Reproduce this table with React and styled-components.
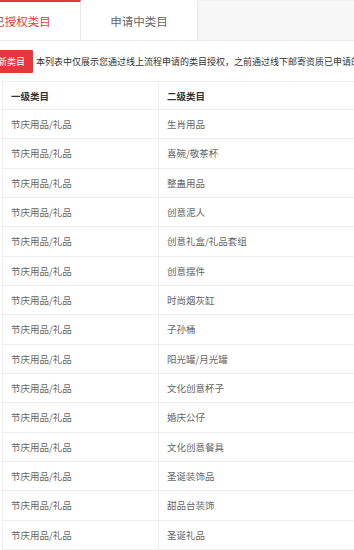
import React from "react";
import styled, { createGlobalStyle } from "styled-components";

const GlobalStyle = createGlobalStyle`
  html, body {
    margin: 0;
    padding: 0;
    background: #fff;
  }
  body {
    font-family: "Noto Sans CJK SC", "Noto Sans", "Liberation Sans", sans-serif;
  }
`;

const Page = styled.div`
  width: 354px;
  height: 550px;
  overflow: hidden;
  background: #fff;
`;

const TabBar = styled.div`
  display: flex;
  height: 39px;
  border-top: 1px solid #eee;
  border-bottom: 1px solid #eaeaea;
  background: #f7f7f7;
`;

const TabList = styled.div`
  display: flex;
  margin-left: -36px;
`;

const Tab = styled.div`
  width: 117px;
  box-sizing: border-box;
  display: flex;
  align-items: center;
  justify-content: center;
  background: #fff;
  font-size: 11.5px;
  color: ${(p) => (p.$active ? "#e4393c" : "#666")};
  border-top: 2px solid ${(p) => (p.$active ? "#e4393c" : "#fff")};
  margin-top: -1px;
  border-right: 1px solid #e8e8e8;
  padding-bottom: 1px;
`;

const Toolbar = styled.div`
  display: flex;
  align-items: center;
  height: 23px;
  margin-top: 9px;
  margin-left: -28px;
  white-space: nowrap;
`;

const AddButton = styled.div`
  height: 23px;
  padding: 0 8px;
  display: flex;
  align-items: center;
  background: #e4393c;
  color: #fff;
  font-size: 9px;
  border-radius: 1px;
`;

const Note = styled.span`
  margin-left: 3px;
  font-size: 9px;
  color: #333;
`;

const Table = styled.div`
  margin-top: 8px;
  margin-left: 2px;
  width: 520px;
  border-top: 1px solid #eee;
  border-left: 1px solid #eee;
`;

const Row = styled.div`
  display: grid;
  grid-template-columns: 155px 1fr;
  height: ${(p) => (p.$head ? "28px" : "29.33px")};
  box-sizing: border-box;
  border-bottom: 1px solid #eee;
`;

const Cell = styled.div`
  display: flex;
  align-items: center;
  padding-left: 8px;
  font-size: 9.5px;
  color: ${(p) => (p.$head ? "#333" : "#666")};
  font-weight: ${(p) => (p.$head ? 700 : 400)};
  & + & {
    border-left: 1px solid #eee;
  }
`;

const rows = [
  "生肖用品",
  "喜碗/敬茶杯",
  "整蛊用品",
  "创意泥人",
  "创意礼盒/礼品套组",
  "创意摆件",
  "时尚烟灰缸",
  "子孙桶",
  "阳光罐/月光罐",
  "文化创意杯子",
  "婚庆公仔",
  "文化创意餐具",
  "圣诞装饰品",
  "甜品台装饰",
  "圣诞礼品",
];

export default function App() {
  return (
    <Page>
      <GlobalStyle />
      <TabBar>
        <TabList>
          <Tab $active>已授权类目</Tab>
          <Tab>申请中类目</Tab>
        </TabList>
      </TabBar>
      <Toolbar>
        <AddButton>申请新类目</AddButton>
        <Note>
          本列表中仅展示您通过线上流程申请的类目授权，之前通过线下邮寄资质已申请的类目授权请联系客服查询
        </Note>
      </Toolbar>
      <Table>
        <Row $head>
          <Cell $head>一级类目</Cell>
          <Cell $head>二级类目</Cell>
        </Row>
        {rows.map((name) => (
          <Row key={name}>
            <Cell>节庆用品/礼品</Cell>
            <Cell>{name}</Cell>
          </Row>
        ))}
      </Table>
    </Page>
  );
}
